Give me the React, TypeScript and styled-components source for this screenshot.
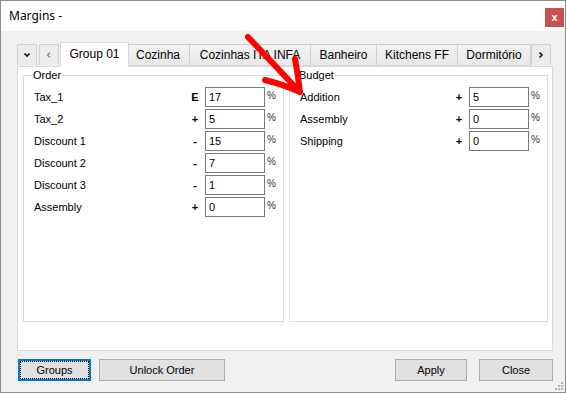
import styled, { createGlobalStyle } from "styled-components";

const GlobalStyle = createGlobalStyle`
  body {
    margin: 0;
    background: #ffffff;
    font-family: "Liberation Sans", Arial, sans-serif;
  }
`;

const S_Window = styled.div`
  position: relative;
  width: 566px;
  height: 393px;
  box-sizing: border-box;
  border: 1px solid #8c8c8c;
  display: flex;
  flex-direction: column;
  background: #f0f0f0;
`;

const S_TitleBar = styled.div`
  height: 30px;
  background: #ffffff;
  display: flex;
  justify-content: space-between;
  align-items: flex-start;
  padding-left: 8px;
`;

const S_Title = styled.span`
  font-family: "Noto Sans", "Open Sans", sans-serif;
  font-size: 12px;
  line-height: 30px;
  color: #000;
`;

const S_CloseBtn = styled.div`
  width: 19px;
  height: 19px;
  margin: 7px 1px 0 0;
  background: #c75050;
  color: #fff;
  font-size: 11px;
  font-weight: bold;
  display: flex;
  align-items: center;
  justify-content: center;
  padding-bottom: 2px;
  box-sizing: border-box;
`;

const S_Body = styled.div`
  flex: 1;
  padding: 11px 12px 0 16px;
  display: flex;
  flex-direction: column;
`;

const S_TabStrip = styled.div`
  height: 24px;
  display: flex;
  align-items: flex-end;
`;

const S_ScrollBtn = styled.div<{ $ml?: number }>`
  width: 20px;
  height: 21px;
  margin-left: ${(p) => p.$ml ?? 0}px;
  margin-bottom: 1px;
  box-sizing: border-box;
  border: 1px solid #d0d0d0;
  border-bottom: none;
  border-radius: 2px 2px 0 0;
  background: #ececec;
  display: flex;
  align-items: center;
  justify-content: center;
`;

const S_Tab = styled.div<{ $w: number; $active?: boolean }>`
  width: ${(p) => p.$w}px;
  height: ${(p) => (p.$active ? 25 : 22)}px;
  box-sizing: border-box;
  margin: ${(p) => (p.$active ? "0 -2px -1px -2px" : "0")};
  border: 1px solid ${(p) => (p.$active ? "#d9d9d9" : "#d0d0d0")};
  border-bottom: ${(p) => (p.$active ? "none" : "1px solid #d9d9d9")};
  border-left: ${(p) => (p.$active ? "1px solid #d9d9d9" : "none")};
  background: ${(p) => (p.$active ? "#ffffff" : "linear-gradient(#f2f2f2, #e8e8e8)")};
  position: relative;
  z-index: ${(p) => (p.$active ? 1 : 0)};
  font-size: 12px;
  color: #000;
  display: flex;
  align-items: center;
  justify-content: center;
  padding-bottom: ${(p) => (p.$active ? 2 : 0)}px;
  white-space: nowrap;
  overflow: hidden;
`;

const S_Panel = styled.div`
  height: 285px;
  box-sizing: border-box;
  border: 1px solid #d9d9d9;
  background: #ffffff;
  display: flex;
  gap: 5px;
  padding: 2px 4px 28px 5px;
`;

const S_Group = styled.fieldset<{ $w?: number }>`
  flex: ${(p) => (p.$w ? `0 0 ${p.$w}px` : "1")};
  box-sizing: border-box;
  margin: 0;
  min-width: 0;
  border: 1px solid #dcdcdc;
  padding: 6px 8px 0 10px;
  display: flex;
  flex-direction: column;
  gap: 2px;
`;

const S_Legend = styled.legend`
  font-size: 11px;
  color: #000;
  padding: 0 1px;
  margin-left: -2px;
`;

const S_Row = styled.div`
  display: flex;
  align-items: center;
  height: 20px;
`;

const S_Label = styled.span`
  flex: 1;
  font-size: 11px;
  color: #000;
`;

const S_Sign = styled.span`
  width: 12px;
  margin-right: 4px;
  text-align: center;
  font-size: 11px;
  font-weight: bold;
  color: #000;
`;

const S_Input = styled.input`
  width: 60px;
  height: 20px;
  box-sizing: border-box;
  border: 1px solid #7a7a7a;
  padding: 0 3px;
  font-family: "Liberation Sans", Arial, sans-serif;
  font-size: 11px;
  color: #000;
  outline: none;
`;

const S_Percent = styled.span`
  width: 8px;
  margin: 3px 0 0 2px;
  align-self: flex-start;
  font-size: 10px;
  line-height: 11px;
  color: #333;
`;

const S_ButtonBar = styled.div`
  display: flex;
  align-items: center;
  margin-top: 8px;
  padding-left: 1px;
`;

const S_Spacer = styled.div`
  flex: 1;
`;

const S_Button = styled.button<{ $w: number; $focused?: boolean; $ml?: number }>`
  width: ${(p) => p.$w}px;
  height: 22px;
  margin-left: ${(p) => p.$ml ?? 0}px;
  box-sizing: border-box;
  background: #e1e1e1;
  border: ${(p) => (p.$focused ? "2px solid #0078d7" : "1px solid #adadad")};
  outline: ${(p) => (p.$focused ? "1px dotted #000" : "none")};
  outline-offset: -3px;
  font-family: "Liberation Sans", Arial, sans-serif;
  font-size: 11px;
  color: #000;
  padding: 0;
`;

const S_Grip = styled.svg`
  position: absolute;
  right: 2px;
  bottom: 2px;
`;

const S_Arrow = styled.svg`
  position: absolute;
  left: 0;
  top: 0;
  pointer-events: none;
`;

type Field = { label: string; sign: string; value: string };

const order: Field[] = [
  { label: "Tax_1", sign: "E", value: "17" },
  { label: "Tax_2", sign: "+", value: "5" },
  { label: "Discount 1", sign: "-", value: "15" },
  { label: "Discount 2", sign: "-", value: "7" },
  { label: "Discount 3", sign: "-", value: "1" },
  { label: "Assembly", sign: "+", value: "0" },
];

const budget: Field[] = [
  { label: "Addition", sign: "+", value: "5" },
  { label: "Assembly", sign: "+", value: "0" },
  { label: "Shipping", sign: "+", value: "0" },
];

const tabs = [
  { name: "Group 01", w: 65 },
  { name: "Cozinha", w: 63 },
  { name: "Cozinhas ITA INFA", w: 121 },
  { name: "Banheiro", w: 66 },
  { name: "Kitchens FF", w: 81 },
  { name: "Dormitório", w: 73 },
];

const Chevron = ({ d }: { d: string }) => (
  <svg width="8" height="8" viewBox="0 0 8 8">
    <path d={d} stroke="#111" strokeWidth="1.6" fill="none" />
  </svg>
);

const FieldRow = ({ f }: { f: Field }) => (
  <S_Row>
    <S_Label>{f.label}</S_Label>
    <S_Sign>{f.sign}</S_Sign>
    <S_Input defaultValue={f.value} />
    <S_Percent>%</S_Percent>
  </S_Row>
);

const App = () => {
  return (
    <>
      <GlobalStyle />
      <S_Window>
        <S_TitleBar>
          <S_Title>Margins -</S_Title>
          <S_CloseBtn>x</S_CloseBtn>
        </S_TitleBar>
        <S_Body>
          <S_TabStrip>
            <S_ScrollBtn>
              <Chevron d="M1.5 2.5 L4 5 L6.5 2.5" />
            </S_ScrollBtn>
            <S_ScrollBtn $ml={2}>
              <svg width="8" height="8" viewBox="0 0 8 8">
                <path d="M5 1.5 L2.5 4 L5 6.5" stroke="#888" strokeWidth="1.2" fill="none" />
              </svg>
            </S_ScrollBtn>
            <div style={{ width: 3 }} />
            {tabs.map((t, i) => (
              <S_Tab key={t.name} $w={t.w + (i === 0 ? 4 : 0)} $active={i === 0}>
                {t.name}
              </S_Tab>
            ))}
            <S_ScrollBtn>
              <Chevron d="M2.5 1.5 L5 4 L2.5 6.5" />
            </S_ScrollBtn>
          </S_TabStrip>
          <S_Panel>
            <S_Group $w={261}>
              <S_Legend>Order</S_Legend>
              {order.map((f) => (
                <FieldRow key={f.label} f={f} />
              ))}
            </S_Group>
            <S_Group>
              <S_Legend>Budget</S_Legend>
              {budget.map((f) => (
                <FieldRow key={f.label} f={f} />
              ))}
            </S_Group>
          </S_Panel>
          <S_ButtonBar>
            <S_Button $w={73} $focused>Groups</S_Button>
            <S_Button $w={126} $ml={8}>Unlock Order</S_Button>
            <S_Spacer />
            <S_Button $w={72}>Apply</S_Button>
            <S_Button $w={74} $ml={12}>Close</S_Button>
          </S_ButtonBar>
        </S_Body>
        <S_Grip width="8" height="8" viewBox="0 0 8 8">
          <rect x="6" y="0" width="2" height="2" fill="#b5b5b5" />
          <rect x="3" y="3" width="2" height="2" fill="#b5b5b5" />
          <rect x="6" y="3" width="2" height="2" fill="#b5b5b5" />
          <rect x="0" y="6" width="2" height="2" fill="#b5b5b5" />
          <rect x="3" y="6" width="2" height="2" fill="#b5b5b5" />
          <rect x="6" y="6" width="2" height="2" fill="#b5b5b5" />
        </S_Grip>
        <S_Arrow width="566" height="393" viewBox="0 0 566 393">
          <path
            d="M247 36 L298 90"
            stroke="#ff0000"
            strokeWidth="6"
            strokeLinecap="round"
            fill="none"
          />
          <path
            d="M264 79 Q284 84 299 91 Q297 74 294 58"
            stroke="#ff0000"
            strokeWidth="6"
            strokeLinecap="round"
            strokeLinejoin="round"
            fill="none"
          />
        </S_Arrow>
      </S_Window>
    </>
  );
};

export default App;
